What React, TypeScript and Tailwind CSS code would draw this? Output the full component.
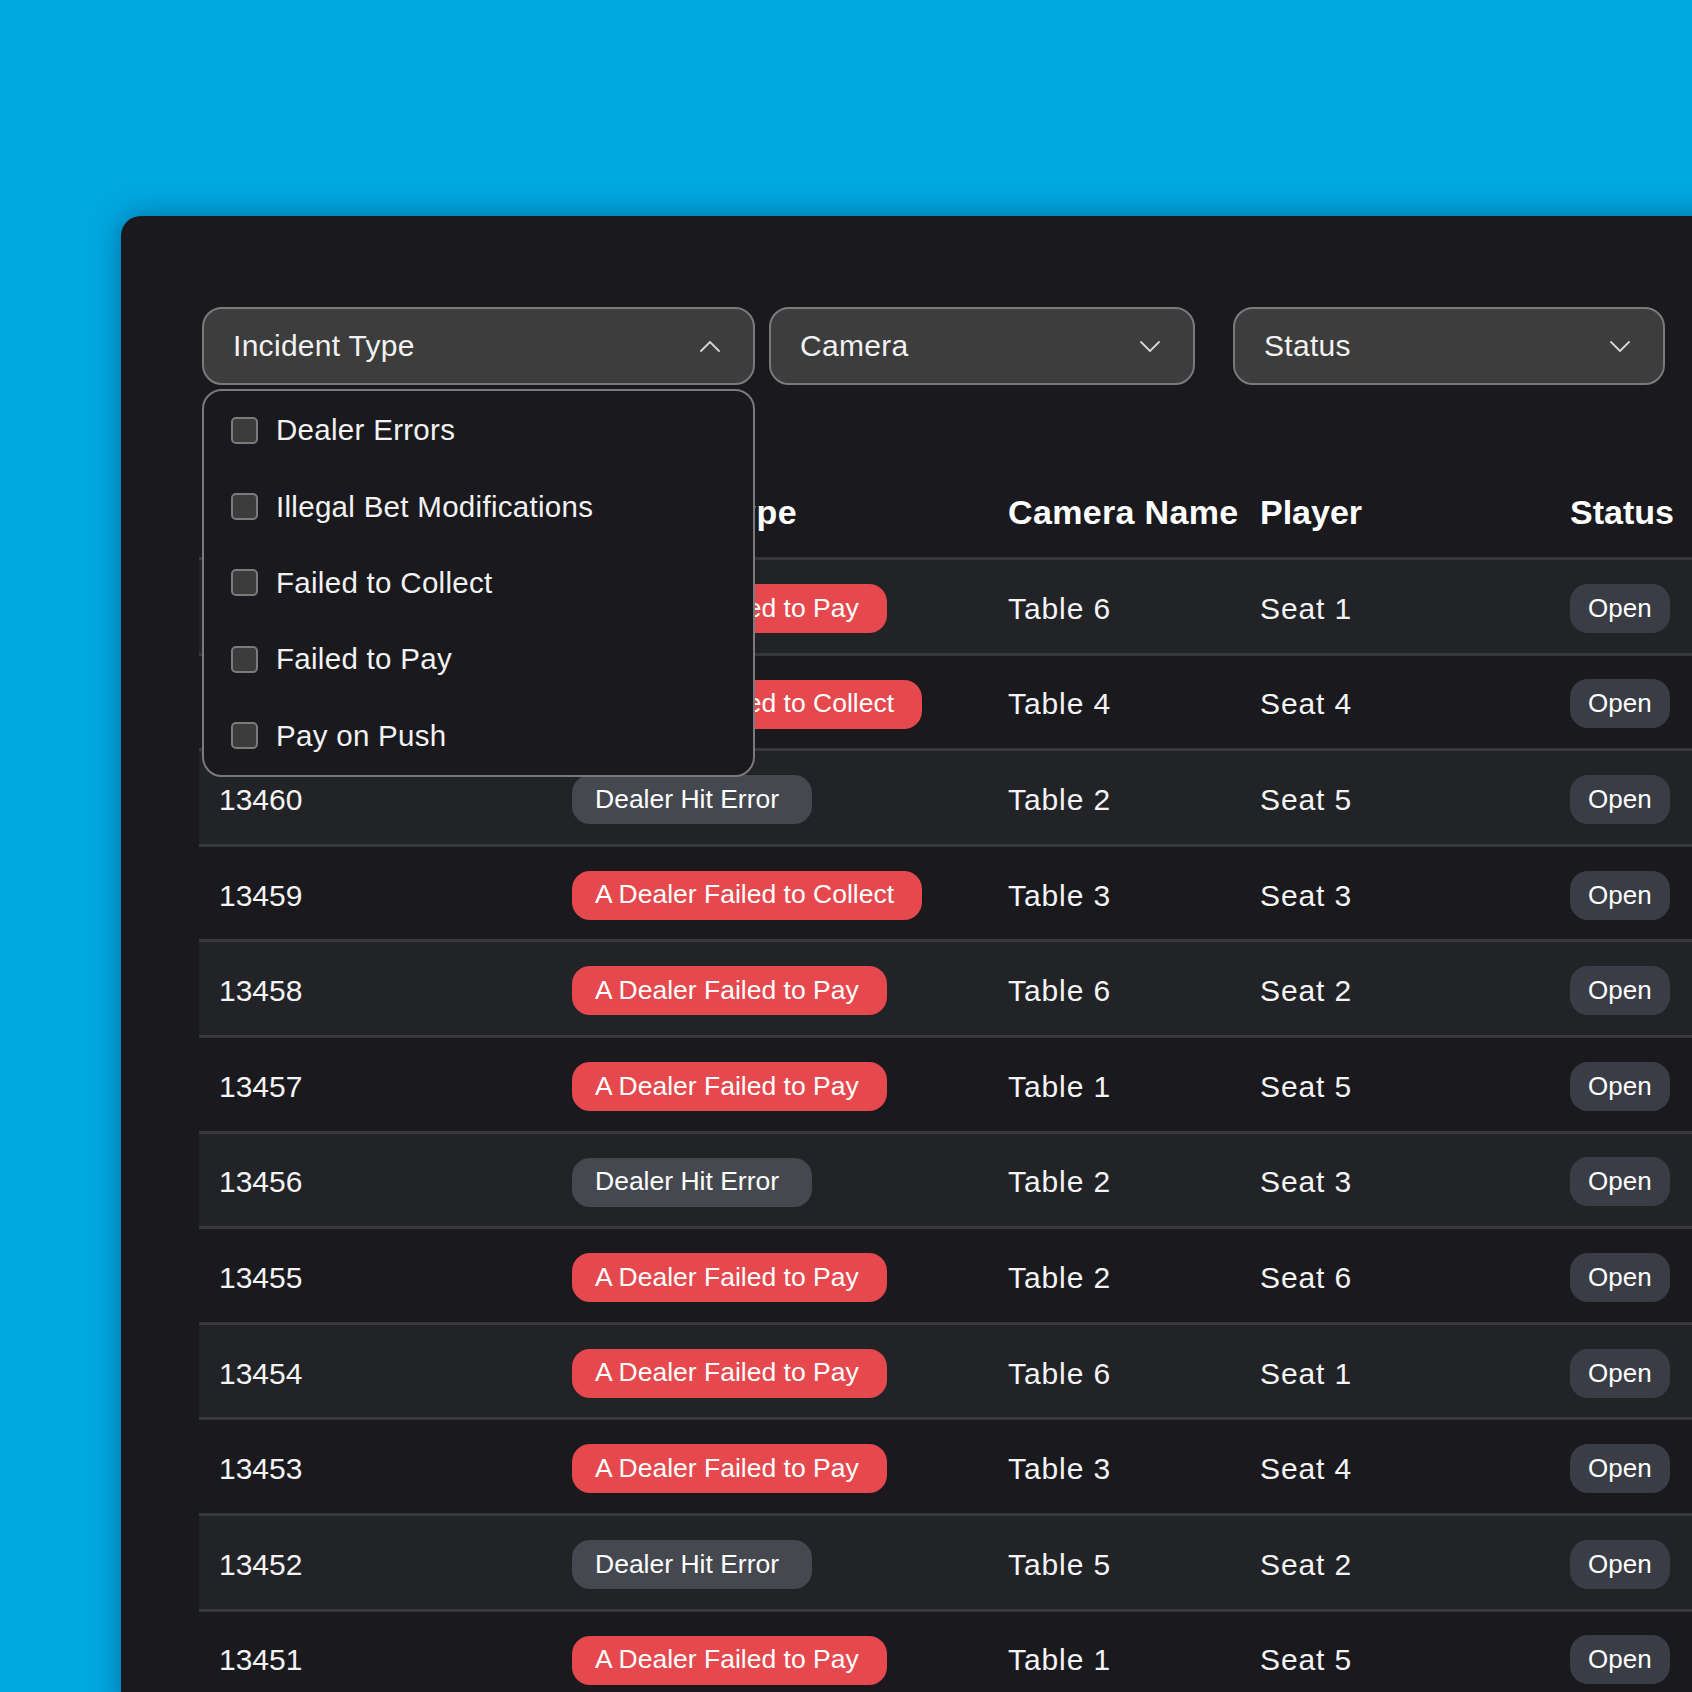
import React from "react";

const rows = [
  { id: "13462", type: "pay", camera: "Table 6", player: "Seat 1" },
  { id: "13461", type: "collect", camera: "Table 4", player: "Seat 4" },
  { id: "13460", type: "hit", camera: "Table 2", player: "Seat 5" },
  { id: "13459", type: "collect", camera: "Table 3", player: "Seat 3" },
  { id: "13458", type: "pay", camera: "Table 6", player: "Seat 2" },
  { id: "13457", type: "pay", camera: "Table 1", player: "Seat 5" },
  { id: "13456", type: "hit", camera: "Table 2", player: "Seat 3" },
  { id: "13455", type: "pay", camera: "Table 2", player: "Seat 6" },
  { id: "13454", type: "pay", camera: "Table 6", player: "Seat 1" },
  { id: "13453", type: "pay", camera: "Table 3", player: "Seat 4" },
  { id: "13452", type: "hit", camera: "Table 5", player: "Seat 2" },
  { id: "13451", type: "pay", camera: "Table 1", player: "Seat 5" },
];

const typeLabels: Record<string, string> = {
  pay: "A Dealer Failed to Pay",
  collect: "A Dealer Failed to Collect",
  hit: "Dealer Hit Error",
};

const options = [
  "Dealer Errors",
  "Illegal Bet Modifications",
  "Failed to Collect",
  "Failed to Pay",
  "Pay on Push",
];

function Chevron({ up }: { up?: boolean }) {
  return (
    <svg width="20" height="11" viewBox="0 0 20 11" fill="none" className="shrink-0">
      <polyline
        points={up ? "1,10 10,1 19,10" : "1,1 10,10 19,1"}
        stroke="#d4d4d4"
        strokeWidth="1.8"
        strokeLinecap="round"
        strokeLinejoin="round"
      />
    </svg>
  );
}

function Trigger({ label, open }: { label: string; open?: boolean }) {
  return (
    <div className="h-[78px] flex items-center justify-between border-2 border-[#7a7a7a] bg-[#3d3d3d] rounded-[20px] pl-[29px] pr-[33px]">
      <span className="text-[30px] text-[#f2f2f2] leading-none tracking-[0.01em]">{label}</span>
      <Chevron up={open} />
    </div>
  );
}

export default function App() {
  return (
    <div
      className="w-[1692px] h-[1692px] overflow-hidden bg-[#00a8e0] flex items-start"
      style={{ fontFamily: '"Liberation Sans", Arial, sans-serif' }}
    >
      <div className="mt-[216px] ml-[121px] w-[1640px] h-[1500px] shrink-0 bg-[#1a1a1e] rounded-tl-[20px] shadow-[0_0_28px_rgba(0,40,80,0.45)] pl-[78px] pt-[91px]">
        {/* Filters */}
        <div className="ml-[3px] flex items-start relative z-10">
          <div className="relative w-[553px]">
            <Trigger label="Incident Type" open />
            <div className="absolute left-0 top-[82px] w-[553px] h-[388px] bg-[#1a1a1e] border-2 border-[#7a7a7a] rounded-[20px] pt-[1px] pl-[27px]">
              {options.map((o) => (
                <div key={o} className="h-[76.3px] flex items-center gap-[18px]">
                  <span className="w-[27px] h-[27px] rounded-[5px] border-2 border-[#7b7b7b] bg-[#3c3c3c]" />
                  <span className="text-[29.5px] text-[#f2f2f2] leading-none tracking-[0.01em]">{o}</span>
                </div>
              ))}
            </div>
          </div>
          <div className="w-[426px] ml-[14px]">
            <Trigger label="Camera" />
          </div>
          <div className="w-[432px] ml-[38px]">
            <Trigger label="Status" />
          </div>
        </div>

        {/* Table */}
        <div className="mt-[82px]">
          <div className="grid grid-cols-[353px_436px_252px_310px_1fr] h-[90px] items-center text-[34px] font-bold text-white">
            <div className="pl-[20px]">Incident ID</div>
            <div className="pl-[20px] tracking-[0.02em]">Incident Type</div>
            <div className="pl-[20px] tracking-[0.01em]">Camera Name</div>
            <div className="pl-[20px]">Player</div>
            <div className="pl-[20px]">Status</div>
          </div>
          {rows.map((r, i) => (
            <div
              key={r.id}
              className={`grid grid-cols-[353px_436px_252px_310px_1fr] h-[95.6px] border-t-[3px] border-[#37383e] items-center text-[30px] text-[#f4f4f5] pt-[4px] ${
                i % 2 === 0 ? "bg-[#222327]" : "bg-[#1a1a1e]"
              }`}
            >
              <div className="pl-[20px]">{r.id}</div>
              <div className="pl-[20px]">
                <span
                  className={`inline-flex items-center h-[49px] rounded-[18px] pl-[23px] text-[26.5px] text-white ${
                    r.type === "hit" ? "bg-[#45484f] pr-[33px]" : "bg-[#e5484d] pr-[28px]"
                  }`}
                >
                  {typeLabels[r.type]}
                </span>
              </div>
              <div className="pl-[20px] tracking-[0.03em]">{r.camera}</div>
              <div className="pl-[20px] tracking-[0.03em]">{r.player}</div>
              <div className="pl-[20px]">
                <span className="inline-flex items-center h-[49px] rounded-[18px] px-[18px] text-[26px] text-white bg-[#3a3d45]">
                  Open
                </span>
              </div>
            </div>
          ))}
        </div>
      </div>
    </div>
  );
}
